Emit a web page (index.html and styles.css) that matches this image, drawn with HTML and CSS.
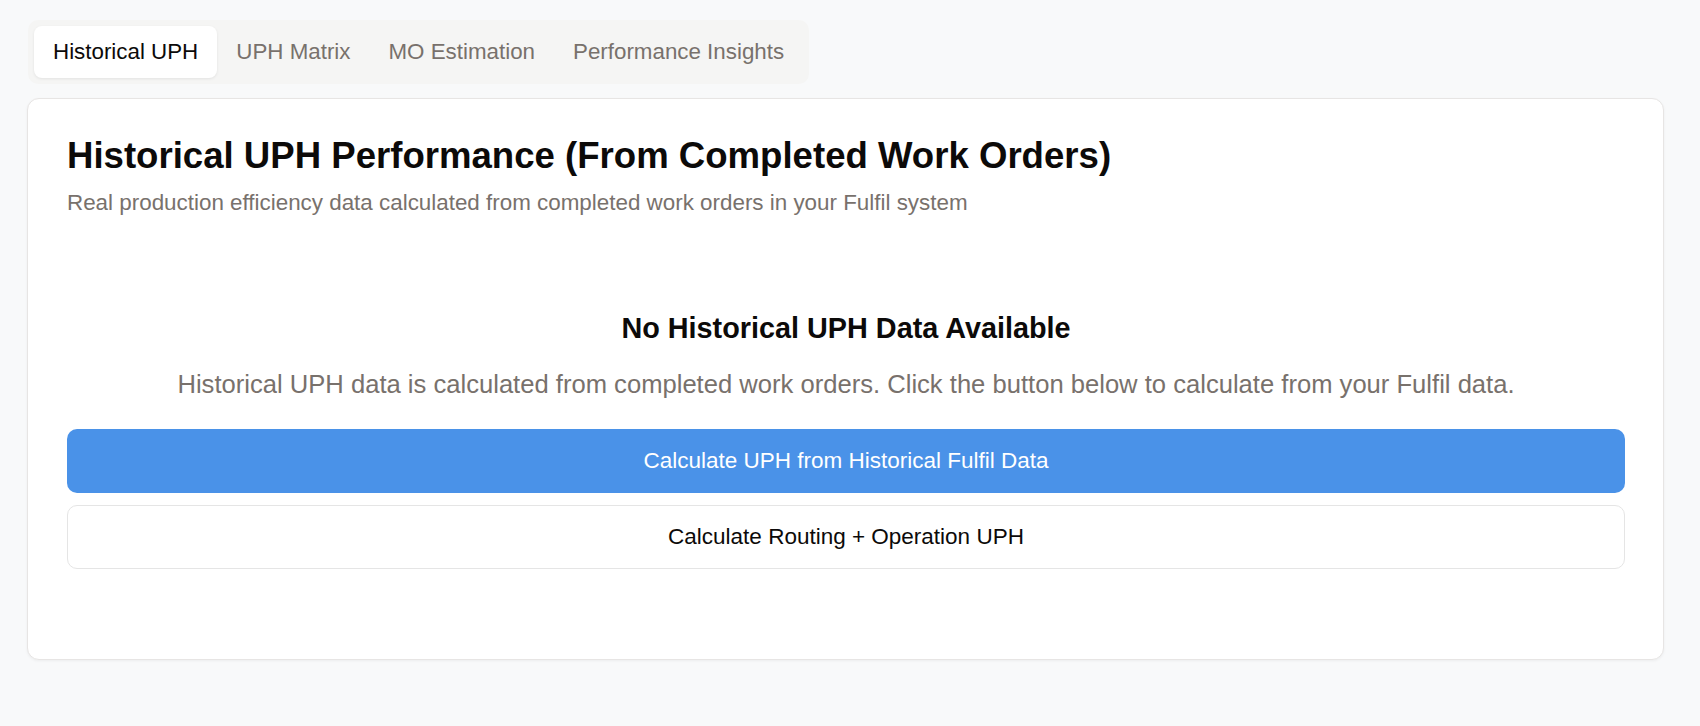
FILE: index.html
```html
<!DOCTYPE html>
<html lang="en">
<head>
<meta charset="utf-8">
<title>Historical UPH</title>
<link rel="stylesheet" href="styles.css">
</head>
<body>
<div class="page">
  <nav class="tabs">
    <button class="tab active">Historical UPH</button>
    <button class="tab">UPH Matrix</button>
    <button class="tab">MO Estimation</button>
    <button class="tab">Performance Insights</button>
  </nav>
  <section class="card">
    <header class="card-header">
      <h1 class="card-title">Historical UPH Performance (From Completed Work Orders)</h1>
      <p class="card-subtitle">Real production efficiency data calculated from completed work orders in your Fulfil system</p>
    </header>
    <div class="empty">
      <h2 class="empty-title">No Historical UPH Data Available</h2>
      <p class="empty-text">Historical UPH data is calculated from completed work orders. Click the button below to calculate from your Fulfil data.</p>
      <div class="actions">
        <button class="btn btn-primary">Calculate UPH from Historical Fulfil Data</button>
        <button class="btn btn-outline">Calculate Routing + Operation UPH</button>
      </div>
    </div>
  </section>
</div>
</body>
</html>
```

FILE: styles.css
```css
* { box-sizing: border-box; }

html, body {
  margin: 0;
  padding: 0;
  background: #f8f9fa;
  font-family: "Liberation Sans", Arial, Helvetica, sans-serif;
  color: #0c0a09;
}

.page {
  padding: 20px 36px 40px 27px;
}

.tabs {
  display: inline-flex;
  padding: 6px;
  margin-left: 1px;
  background: #f5f5f4;
  border-radius: 10px;
}

.tab {
  font-family: inherit;
  font-size: 22.35px;
  line-height: 33px;
  padding: 9px 19px 10px;
  border: none;
  background: transparent;
  color: #78716c;
  border-radius: 8px;
  cursor: pointer;
}

.tab.active {
  background: #ffffff;
  color: #0c0a09;
  box-shadow: 0 1px 3px rgba(0, 0, 0, 0.08);
}

.card {
  margin-top: 14px;
  background: #ffffff;
  border: 1px solid #e7e5e4;
  border-radius: 12px;
  box-shadow: 0 1px 3px rgba(0, 0, 0, 0.05);
  padding: 35px 38px 40px 39px;
}

.card-title {
  margin: 0;
  font-size: 36.6px;
  line-height: 1.2;
  font-weight: 700;
  color: #0c0a09;
}

.card-subtitle {
  margin: 8px 0 0;
  font-size: 22.4px;
  line-height: 33px;
  color: #78716c;
}

.empty {
  padding: 92px 0 50px;
  text-align: center;
}

.empty-title {
  margin: 0;
  font-size: 28.8px;
  line-height: 1.2;
  font-weight: 700;
  color: #0c0a09;
}

.empty-text {
  margin: 20px 0 0;
  font-size: 25.6px;
  line-height: 38px;
  color: #78716c;
}

.actions {
  margin-top: 26px;
  display: flex;
  flex-direction: column;
  gap: 12px;
}

.btn {
  font-family: inherit;
  font-size: 22.5px;
  height: 64px;
  border-radius: 10px;
  cursor: pointer;
  display: flex;
  align-items: center;
  justify-content: center;
  width: 100%;
}

.btn-primary {
  background: #4a92e8;
  color: #ffffff;
  border: none;
}

.btn-outline {
  background: #ffffff;
  color: #0c0a09;
  border: 1px solid #e5e5e5;
}
```
